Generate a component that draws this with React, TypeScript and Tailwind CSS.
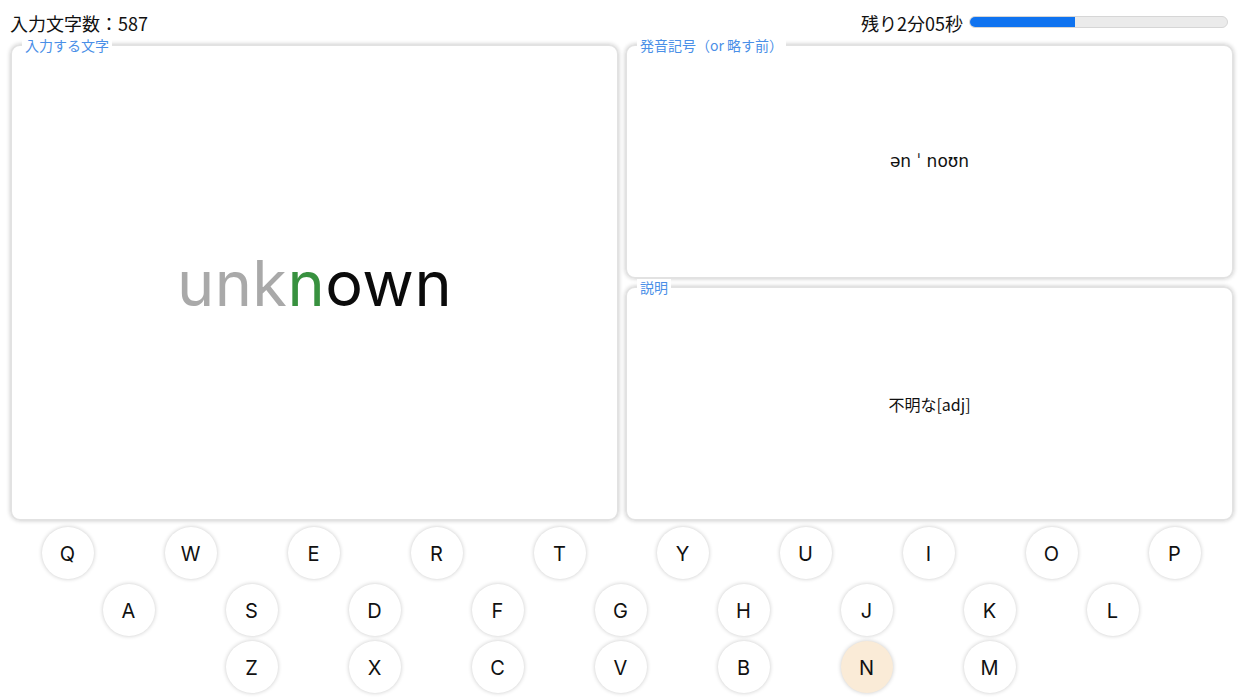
const rows = [
  { keys: ['Q', 'W', 'E', 'R', 'T', 'Y', 'U', 'I', 'O', 'P'], offset: 'ml-[6px]' },
  { keys: ['A', 'S', 'D', 'F', 'G', 'H', 'J', 'K', 'L'], offset: 'ml-[67px]' },
  { keys: ['Z', 'X', 'C', 'V', 'B', 'N', 'M'], offset: 'ml-[190px]' },
]

const active = 'N'

const Panel = ({ label, children }: { label: string; children: React.ReactNode }) => {
  return (
    <div className="relative h-full rounded-[10px] border-2 border-[#e2e2e2] shadow-[0_0_4px_rgba(0,0,0,0.2)] flex items-center justify-center">
      <span className="absolute -top-[9px] left-[10px] bg-white px-[3px] text-[14px] leading-[17px] text-[#4a8fe7] font-['Noto_Sans_CJK_JP',sans-serif]">
        {label}
      </span>
      {children}
    </div>
  )
}

export default function App() {
  return (
    <div className="w-[1244px] h-[700px] bg-white overflow-hidden font-['Noto_Sans_CJK_JP',sans-serif] text-[#111]">
      <div className="h-[44px] flex items-center justify-between pl-[10px] pr-[16px] pt-[3px]">
        <span className="text-[18px]">入力文字数：587</span>
        <div className="flex items-center gap-[6px]">
          <span className="text-[18px]">残り2分05秒</span>
          <div className="w-[259px] h-[12px] -mt-[3px] rounded-full bg-[#ebebeb] border border-[#d6d6d6] overflow-hidden">
            <div className="h-full bg-[#0f73f0]" style={{ width: '41%' }} />
          </div>
        </div>
      </div>

      <div className="grid grid-cols-2 gap-[6px] px-[10px] h-[477px]">
        <Panel label="入力する文字">
          <div className="text-[63px] leading-none font-['Inter',sans-serif] tracking-[0.5px] mt-[2px]">
            <span className="text-[#a9a9a9]">unk</span>
            <span className="text-[#38913f]">n</span>
            <span className="text-[#0b0b0b]">own</span>
          </div>
        </Panel>
        <div className="grid grid-rows-2 gap-[7px] h-full">
          <Panel label="発音記号（or 略す前）">
            <span className="text-[17px] font-['DejaVu_Sans',sans-serif]">ən ˈ noʊn</span>
          </Panel>
          <Panel label="説明">
            <span className="text-[16px]">不明な[adj]</span>
          </Panel>
        </div>
      </div>

      <div className="flex flex-col gap-[5px] mt-[6px]">
        {rows.map((row, i) => (
          <div key={i} className={`flex ${row.offset}`}>
            {row.keys.map((k) => (
              <div key={k} className="w-[123px] flex justify-center">
                <div
                  className={`w-[52px] h-[52px] rounded-full flex items-center justify-center pt-[2px] text-[20px] font-['Inter',sans-serif] shadow-[0_0_4px_rgba(0,0,0,0.22)] ${
                    k === active ? 'bg-[#faebd7]' : 'bg-white'
                  }`}
                >
                  {k}
                </div>
              </div>
            ))}
          </div>
        ))}
      </div>
    </div>
  )
}
